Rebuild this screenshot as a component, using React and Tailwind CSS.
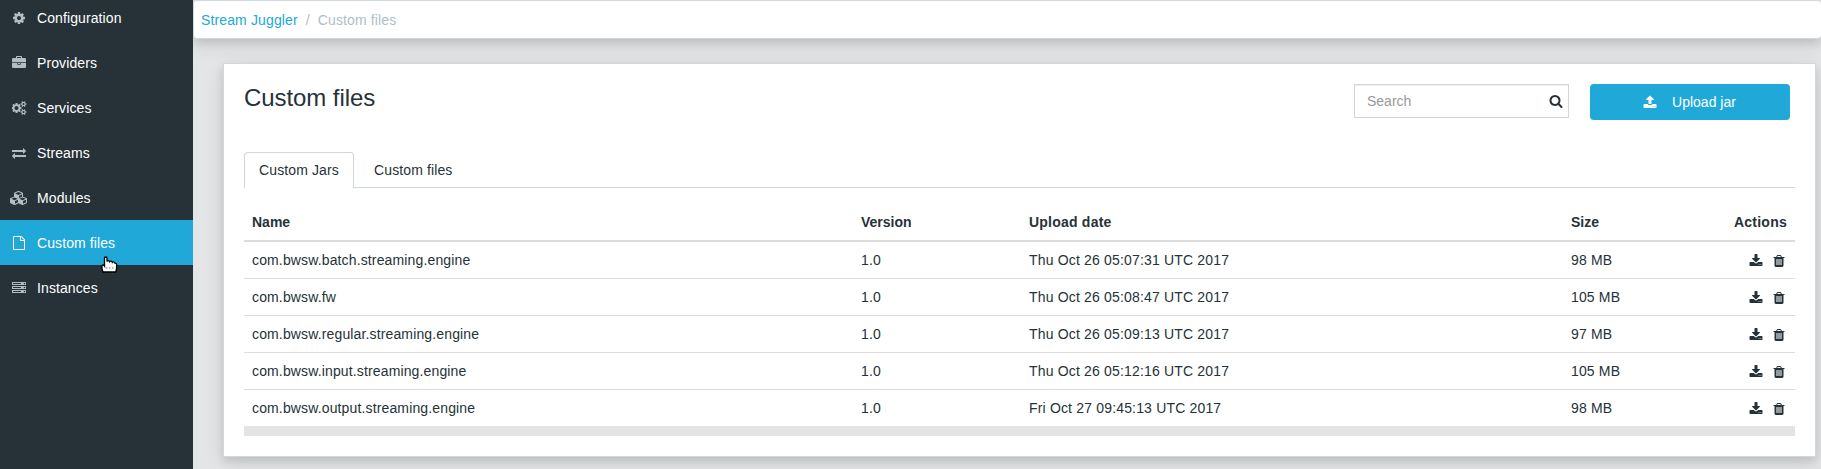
import React from 'react';

const ICONS = {
  cog: [1792, 'M1152 896q0-106-75-181t-181-75-181 75-75 181 75 181 181 75 181-75 75-181zm512-109v222q0 12-8 23t-20 13l-185 28q-19 54-39 91 35 50 107 138 10 12 10 25t-9 23q-27 37-99 108t-94 71q-12 0-26-9l-138-108q-44 23-91 38-16 136-29 186-7 28-36 28h-222q-14 0-24.5-8.5t-11.5-21.5l-28-184q-49-16-90-37l-141 107q-10 9-25 9-14 0-25-11-126-114-165-168-7-10-7-23 0-12 8-23 15-21 51-66.5t54-70.5q-27-50-41-99l-183-27q-13-2-21-12.5t-8-23.5v-222q0-12 8-23t19-13l186-28q14-46 39-92-40-57-107-138-10-12-10-24 0-10 9-23 26-36 98.5-107.5t94.5-71.5q13 0 26 10l138 107q44-23 91-38 16-136 29-186 7-28 36-28h222q14 0 24.5 8.5t11.5 21.5l28 184q49 16 90 37l142-107q9-9 24-9 13 0 25 10 129 119 165 170 7 8 7 22 0 12-8 23-15 21-51 66.5t-54 70.5q26 50 41 98l183 28q13 2 21 12.5t8 23.5z'],
  briefcase: [1792, 'M640 256h512v-128h-512v128zm1152 640v480q0 66-47 113t-113 47h-1472q-66 0-113-47t-47-113v-480h672v160q0 26 19 45t45 19h320q26 0 45-19t19-45v-160h672zm-768 0v128h-256v-128h256zm768-480v384h-1792v-384q0-66 47-113t113-47h352v-160q0-40 28-68t68-28h576q40 0 68 28t28 68v160h352q66 0 113 47t47 113z'],
  cogs: [1920, 'M832 896q0-106-75-181t-181-75-181 75-75 181 75 181 181 75 181-75 75-181zm768 512q0-52-38-90t-90-38-90 38-38 90q0 53 37.5 90.5t90.5 37.5 90.5-37.5 37.5-90.5zm0-1024q0-52-38-90t-90-38-90 38-38 90q0 53 37.5 90.5t90.5 37.5 90.5-37.5 37.5-90.5zm-384 421v185q0 10-7 19.5t-16 10.5l-155 24q-11 35-32 76 34 48 90 115 7 11 7 20 0 12-7 19-23 30-82.5 89.5t-78.5 59.5q-11 0-21-7l-115-90q-37 19-77 31-11 108-23 155-7 24-30 24h-186q-11 0-20-7.5t-10-17.5l-23-153q-34-10-75-31l-118 89q-7 7-20 7-11 0-21-8-144-133-144-160 0-9 7-19 10-14 41-53t47-61q-23-44-35-82l-152-24q-10-1-17-9.5t-7-19.5v-185q0-10 7-19.5t16-10.5l155-24q11-35 32-76-34-48-90-115-7-11-7-20 0-12 7-20 22-30 82-89t79-59q11 0 21 7l115 90q34-18 77-32 11-108 23-154 7-24 30-24h186q11 0 20 7.5t10 17.5l23 153q34 10 75 31l118-89q8-7 20-7 11 0 21 8 144 133 144 160 0 8-7 19-12 16-42 54t-45 60q23 48 34 82l152 23q10 2 17 10.5t7 19.5zm640 533v140q0 16-149 31-12 27-30 52 51 113 51 138 0 4-4 7-122 71-124 71-8 0-46-47t-52-68q-20 2-30 2t-30-2q-14 21-52 68t-46 47q-2 0-124-71-4-3-4-7 0-25 51-138-18-25-30-52-149-15-149-31v-140q0-16 149-31 13-29 30-52-51-113-51-138 0-4 4-7 4-2 35-20t59-34 30-16q8 0 46 46.5t52 67.5q20-2 30-2t30 2q51-71 92-112l6-2q4 0 124 70 4 3 4 7 0 25-51 138 17 23 30 52 149 15 149 31zm0-1024v140q0 16-149 31-12 27-30 52 51 113 51 138 0 4-4 7-122 71-124 71-8 0-46-47t-52-68q-20 2-30 2t-30-2q-14 21-52 68t-46 47q-2 0-124-71-4-3-4-7 0-25 51-138-18-25-30-52-149-15-149-31v-140q0-16 149-31 13-29 30-52-51-113-51-138 0-4 4-7 4-2 35-20t59-34 30-16q8 0 46 46.5t52 67.5q20-2 30-2t30 2q51-71 92-112l6-2q4 0 124 70 4 3 4 7 0 25-51 138 17 23 30 52 149 15 149 31z'],
  exchange: [1792, 'M1792 1184v192q0 13-9.5 22.5t-22.5 9.5h-1376v192q0 13-9.5 22.5t-22.5 9.5q-12 0-24-10l-319-320q-9-9-9-22 0-14 9-23l320-320q9-9 23-9 13 0 22.5 9.5t9.5 22.5v192h1376q13 0 22.5 9.5t9.5 22.5zm0-544q0 14-9 23l-320 320q-9 9-23 9-13 0-22.5-9.5t-9.5-22.5v-192h-1376q-13 0-22.5-9.5t-9.5-22.5v-192q0-13 9.5-22.5t22.5-9.5h1376v-192q0-14 9-23t23-9q12 0 24 10l319 319q9 9 9 23z'],
  cubes: [2304, 'M640 1632l384-192v-314l-384 164v342zm-64-454l404-173-404-173-404 173zm1088 454l384-192v-314l-384 164v342zm-64-454l404-173-404-173-404 173zm-448-293l384-165v-266l-384 164v267zm-64-379l441-189-441-189-441 189zm1088 518v416q0 36-19 67t-52 47l-448 224q-25 14-57 14t-57-14l-448-224q-4-2-7-4-2 2-7 4l-448 224q-25 14-57 14t-57-14l-448-224q-33-16-52-47t-19-67v-416q0-38 21.5-70t56.5-48l434-186v-400q0-38 21.5-70t56.5-48l448-192q23-10 50-10t50 10l448 192q35 16 56.5 48t21.5 70v400l434 186q36 16 57 48t21 70z'],
  file: [1792, 'M1596 380q28 28 48 76t20 88v1152q0 40-28 68t-68 28h-1344q-40 0-68-28t-28-68v-1600q0-40 28-68t68-28h896q40 0 88 20t76 48zm-444-244v376h376q-10-29-22-41l-313-313q-12-12-41-22zm384 1528v-1024h-416q-40 0-68-28t-28-68v-416h-768v1536h1280z'],
  server: [1792, 'M128 1408h1024v-128h-1024v128zm0-512h1024v-128h-1024v128zm1568 448q0-40-28-68t-68-28-68 28-28 68 28 68 68 28 68-28 28-68zm-1568-960h1024v-128h-1024v128zm1568 448q0-40-28-68t-68-28-68 28-28 68 28 68 68 28 68-28 28-68zm0-512q0-40-28-68t-68-28-68 28-28 68 28 68 68 28 68-28 28-68zm96 832v384h-1792v-384h1792zm0-512v384h-1792v-384h1792zm0-512v384h-1792v-384h1792z'],
  upload: [1792, 'M1344 1472q0-26-19-45t-45-19-45 19-19 45 19 45 45 19 45-19 19-45zm256 0q0-26-19-45t-45-19-45 19-19 45 19 45 45 19 45-19 19-45zm128-224v320q0 40-28 68t-68 28h-1472q-40 0-68-28t-28-68v-320q0-40 28-68t68-28h427q21 56 70.5 92t110.5 36h256q61 0 110.5-36t70.5-92h427q40 0 68 28t28 68zm-325-648q-17 40-59 40h-256v448q0 26-19 45t-45 19h-256q-26 0-45-19t-19-45v-448h-256q-42 0-59-40-17-39 14-69l448-448q18-19 45-19t45 19l448 448q31 30 14 69z'],
  download: [1792, 'M1344 1344q0-26-19-45t-45-19-45 19-19 45 19 45 45 19 45-19 19-45zm256 0q0-26-19-45t-45-19-45 19-19 45 19 45 45 19 45-19 19-45zm128-224v320q0 40-28 68t-68 28h-1472q-40 0-68-28t-28-68v-320q0-40 28-68t68-28h465l135 136q58 56 136 56t136-56l136-136h464q40 0 68 28t28 68zm-325-569q17 41-14 70l-448 448q-18 19-45 19t-45-19l-448-448q-31-29-14-70 17-39 59-39h256v-448q0-26 19-45t45-19h256q26 0 45 19t19 45v448h256q42 0 59 39z'],
  trash: [1792, 'M704 1376v-704q0-14-9-23t-23-9h-64q-14 0-23 9t-9 23v704q0 14 9 23t23 9h64q14 0 23-9t9-23zm256 0v-704q0-14-9-23t-23-9h-64q-14 0-23 9t-9 23v704q0 14 9 23t23 9h64q14 0 23-9t9-23zm256 0v-704q0-14-9-23t-23-9h-64q-14 0-23 9t-9 23v704q0 14 9 23t23 9h64q14 0 23-9t9-23zm-544-992h448l-48-117q-7-9-17-11h-317q-10 2-17 11zm928 32v64q0 14-9 23t-23 9h-96v948q0 83-47 143.5t-113 60.5h-832q-66 0-113-58.5t-47-141.5v-952h-96q-14 0-23-9t-9-23v-64q0-14 9-23t23-9h309l70-167q15-37 54-63t79-26h320q40 0 79 26t54 63l70 167h309q14 0 23 9t9 23z'],
  search: [1792, 'M1216 832q0-185-131.5-316.5t-316.5-131.5-316.5 131.5-131.5 316.5 131.5 316.5 316.5 131.5 316.5-131.5 131.5-316.5zm512 832q0 52-38 90t-90 38q-54 0-90-38l-343-342q-179 124-399 124-143 0-273.5-55.5t-225-150-150-225-55.5-273.5 55.5-273.5 150-225 225-150 273.5-55.5 273.5 55.5 225 150 150 225 55.5 273.5q0 220-124 399l343 343q37 37 37 90z'],
};

function Icon({ name, className = '' }) {
  const [width, d] = ICONS[name];
  return (
    <svg viewBox={`0 0 ${width} 1792`} width={(width * 14) / 1792} height="14" fill="currentColor" className={`shrink-0 ${className}`}>
      <path d={d} />
    </svg>
  );
}

const NAV = [
  ['cog', 'Configuration'],
  ['briefcase', 'Providers'],
  ['cogs', 'Services'],
  ['exchange', 'Streams'],
  ['cubes', 'Modules'],
  ['file', 'Custom files'],
  ['server', 'Instances'],
];

const ROWS = [
  ['com.bwsw.batch.streaming.engine', '1.0', 'Thu Oct 26 05:07:31 UTC 2017', '98 MB'],
  ['com.bwsw.fw', '1.0', 'Thu Oct 26 05:08:47 UTC 2017', '105 MB'],
  ['com.bwsw.regular.streaming.engine', '1.0', 'Thu Oct 26 05:09:13 UTC 2017', '97 MB'],
  ['com.bwsw.input.streaming.engine', '1.0', 'Thu Oct 26 05:12:16 UTC 2017', '105 MB'],
  ['com.bwsw.output.streaming.engine', '1.0', 'Fri Oct 27 09:45:13 UTC 2017', '98 MB'],
];

const GRID = 'grid grid-cols-[609px_168px_542px_1fr_auto] items-center';

function PointerCursor() {
  return (
    <svg className="absolute left-[101px] top-[256px] z-20" width="17" height="18" viewBox="0 0 17 18">
      <path
        d="M3.5 9.5V2.2Q3.5 1 4.75 1T6 2.2V5.5Q6.2 4.6 7.2 4.6T8.6 5.7Q9 5 10 5.1T11.3 6.3Q11.8 5.7 12.8 6T14 7.2Q15.6 7 15.6 8.6V12.5L14.8 16H2L1 13V10Q1 9 2 9T3.5 9.9Z"
        fill="#fff"
        stroke="#000"
        strokeWidth="1.3"
      />
      <path d="M5 12h1.5M8 12h1.5M11 12h1.5" stroke="#777" />
    </svg>
  );
}

export default function App() {
  return (
    <div className="relative flex h-[469px] w-[1821px] overflow-hidden bg-[#e4e5e6] font-['Liberation_Sans',Arial,sans-serif] text-sm leading-[21px] text-[#263238]">
      <nav className="z-10 -mt-[5px] flex w-[193px] shrink-0 flex-col bg-[#263238] tracking-[0.1px] text-white">
        {NAV.map(([icon, label]) => (
          <a key={label} className={`flex h-[45px] items-center pt-px ${label === 'Custom files' ? 'bg-[#20a8d8]' : ''}`}>
            <span className={`ml-[9px] mr-2 flex w-5 justify-center ${label === 'Custom files' ? '' : 'text-[#b0bec5]'}`}>
              <Icon name={icon} />
            </span>
            <span className="pt-px">{label}</span>
          </a>
        ))}
      </nav>

      <main className="flex min-w-0 flex-1 flex-col">
        <div className="flex h-[39px] shrink-0 items-center rounded-[4px] border border-r-0 border-[#cfd8dc] bg-white pl-[7px] pt-[2px] tracking-[0.13px] shadow-[0_4px_8px_0_rgba(0,0,0,0.1),0_6px_20px_0_rgba(0,0,0,0.1)]">
          <a className="text-[#20a8d8]">Stream Juggler</a>
          <span className="px-2 text-[#b0bec5]">/</span>
          <span className="text-[#b0bec5]">Custom files</span>
        </div>

        <section className="ml-[30px] mt-6 flex h-[394px] w-[1593px] shrink-0 flex-col border border-[#cfd8dc] bg-white px-5 pt-5 shadow-[0_4px_8px_0_rgba(0,0,0,0.1),0_6px_20px_0_rgba(0,0,0,0.1)]">
          <header className="flex h-[68px] items-start">
            <h1 className="flex-1 pt-px text-2xl leading-[26px] tracking-[-0.08px]">Custom files</h1>
            <div className="mr-[21px] flex h-[34px] w-[215px] items-center border border-[#d2d6d8] pl-3 pr-[5.5px] shadow-[inset_0_1px_1px_rgba(0,0,0,0.075)]">
              <span className="flex-1 text-[#999]">Search</span>
              <Icon name="search" />
            </div>
            <button className="mr-[5px] flex h-9 w-[200px] items-center justify-center rounded-[4px] bg-[#20a8d8] pr-px text-white">
              <Icon name="upload" className="mr-[15px]" />
              Upload jar
            </button>
          </header>

          <div className="flex h-9 gap-[4px] border-b border-[#cfd8dc] tracking-[0.12px]">
            <a className="-mb-px flex w-[110px] items-center rounded-t-[4px] border border-b-0 border-[#cfd8dc] bg-white pl-[14px]">Custom Jars</a>
            <a className="flex items-center px-4 pt-px">Custom files</a>
          </div>

          <div className="mt-4 flex flex-col">
            <div className={`${GRID} h-[38px] border-b-2 border-[#dcdcdc] px-2 font-bold`}>
              <span>Name</span>
              <span>Version</span>
              <span className="tracking-[0.22px]">Upload date</span>
              <span>Size</span>
              <span className="tracking-[0.25px]">Actions</span>
            </div>
            {ROWS.map(([name, version, date, size], i) => (
              <div key={name} className={`${GRID} px-2 ${i ? 'h-[37px] border-t border-[#dcdcdc]' : 'h-9'}`}>
                <span className="tracking-[0.14px]">{name}</span>
                <span className="tracking-[0.1px]">{version}</span>
                <span className="tracking-[0.17px]">{date}</span>
                <span className="tracking-[0.15px]">{size}</span>
                <span className="flex items-center gap-[9px] pt-[2px] pr-[1.5px]">
                  <Icon name="download" />
                  <Icon name="trash" />
                </span>
              </div>
            ))}
            <div className="h-2.5 bg-[#e4e4e4]" />
          </div>
        </section>
      </main>
      <PointerCursor />
    </div>
  );
}
